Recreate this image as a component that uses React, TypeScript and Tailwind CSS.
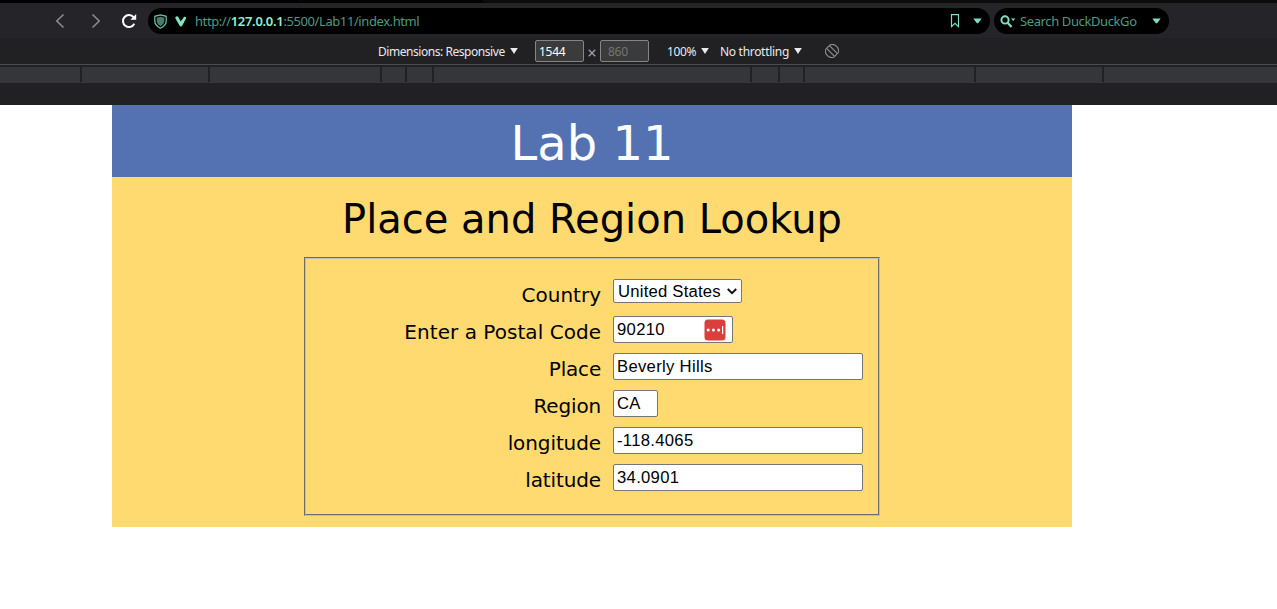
import React from "react";

const SEGMENTS = [80, 126, 170, 23, 25, 316, 26, 23, 169, 126];

const Caret = ({ className = "" }: { className?: string }) => (
  <svg width="8" height="6" viewBox="0 0 8 6" className={className}>
    <path d="M0.2 0H7.8L4 6Z" fill="currentColor" />
  </svg>
);

const Wedge = () => (
  <svg width="9" height="6" viewBox="0 0 9 6" className="text-[#7fdec0]">
    <path d="M0.3 0.5H8.7L5.3 4.9Q4.5 5.7 3.7 4.9Z" fill="currentColor" />
  </svg>
);

function AddressBar() {
  return (
    <div className="flex h-[35px] items-center bg-[#252429] pt-px font-['Noto_Sans',sans-serif] text-[#4f9a80]">
      <svg width="10" height="16" viewBox="0 0 10 16" className="ml-[55px]" fill="none" stroke="#8b8b8e" strokeWidth="1.6">
        <path d="M8.5 1.5L1.8 8L8.5 14.5" />
      </svg>
      <svg width="10" height="16" viewBox="0 0 10 16" className="ml-[26px]" fill="none" stroke="#8b8b8e" strokeWidth="1.6">
        <path d="M1.5 1.5L8.2 8L1.5 14.5" />
      </svg>
      <svg width="16" height="16" viewBox="0 0 16 16" className="ml-[20px]" fill="none">
        <path d="M12.6 4.2A6 6 0 1 0 13.3 10.8" stroke="#fff" strokeWidth="2" />
        <path d="M15.2 1V6.8H9.4Z" fill="#fff" />
      </svg>
      <div className="ml-[11px] flex h-[26px] w-[842px] shrink-0 items-center rounded-full bg-black">
        <svg width="13" height="15" viewBox="0 0 13 15" className="ml-[6px]">
          <path d="M6.5 0.8L12.2 2.3V7.4Q12 11.5 6.5 14.2Q1 11.5 0.8 7.4V2.3Z" fill="none" stroke="#6cc4a6" strokeWidth="1.2" />
          <path d="M6.5 2.8L10.3 3.8V7.4Q10 10.2 6.5 12.2Q3 10.2 2.7 7.4V3.8Z" fill="#467e6b" />
        </svg>
        <svg width="12" height="11" viewBox="0 0 12 11" className="ml-[8px]">
          <path d="M2 2L5.9 8.8L7.6 5.6" fill="none" stroke="#7fe3c4" strokeWidth="3.2" strokeLinecap="round" strokeLinejoin="round" />
          <path d="M7.3 6L9.7 2.2" fill="none" stroke="#7fe3c4" strokeWidth="2.8" strokeLinecap="round" />
        </svg>
        <div className="ml-[8px] w-[224px] text-[13px] leading-[18px] tracking-[-0.41px] whitespace-nowrap">
          http://<span className="font-semibold tracking-[-0.3px] text-[#8ef0d0]">127.0.0.1</span>:5500/Lab11/index.html
        </div>
        <svg width="10" height="14" viewBox="0 0 10 14" className="ml-[531px]">
          <path d="M1.5 0.7H8.5V12.6L5 9.4L1.5 12.6Z" fill="none" stroke="#7fdec0" strokeWidth="1.2" />
        </svg>
        <div className="ml-[13px]">
          <Wedge />
        </div>
      </div>
      <div className="ml-[4px] flex h-[26px] w-[175px] shrink-0 items-center rounded-full bg-black">
        <svg width="16" height="13" viewBox="0 0 16 13" className="ml-[6px]">
          <circle cx="5" cy="4.9" r="3.6" fill="none" stroke="#7fdec0" strokeWidth="2" />
          <path d="M7.4 7.6L11.5 12" stroke="#7fdec0" strokeWidth="2.2" />
          <path d="M11 3.5H15.3L13.2 6Z" fill="#7fdec0" />
        </svg>
        <div className="ml-[4px] w-[117px] text-[13px] leading-[18px] tracking-[-0.39px] whitespace-nowrap">Search DuckDuckGo</div>
        <div className="ml-[15px]">
          <Wedge />
        </div>
      </div>
    </div>
  );
}

function DeviceToolbar() {
  return (
    <div className="flex h-[27px] items-center border-b border-[#4b4c4f] bg-[#212123] font-['Noto_Sans',sans-serif] text-[12px] leading-[16px] whitespace-nowrap text-[#e8eaed]">
      <div className="ml-[378px] w-[127px] pt-[2px] tracking-[-0.45px]">Dimensions: Responsive</div>
      <Caret className="ml-[5px]" />
      <div className="ml-[17px] flex h-[22px] w-[49px] items-center rounded-[2px] border border-[#858585] bg-[#3b3b3b] pt-px pl-[3px] tracking-[-0.3px] text-white">1544</div>
      <svg width="8" height="8" viewBox="0 0 8 8" className="mx-[4px] mt-[4px]" stroke="#9aa0a6" strokeWidth="1.3">
        <path d="M0.8 0.8L7.2 7.2M7.2 0.8L0.8 7.2" />
      </svg>
      <div className="flex h-[22px] w-[49px] items-center rounded-[2px] border border-[#858585] bg-[#3b3b3b] pt-px pl-[7px] tracking-[-0.3px] text-[#757575]">860</div>
      <div className="ml-[18px] w-[30px] pt-[2px] tracking-[-0.4px]">100%</div>
      <Caret className="ml-[4px]" />
      <div className="ml-[11px] w-[69px] pt-[2px] tracking-[-0.3px]">No throttling</div>
      <Caret className="ml-[5px]" />
      <svg width="14" height="14" viewBox="0 0 14 14" className="ml-[23px]" fill="none" stroke="#8b8c8e" strokeWidth="1.1">
        <path d="M4.6 1A6.4 6.4 0 0 1 13 9.4M9.4 13A6.4 6.4 0 0 1 1 4.6" />
        <path d="M1.6 4.4L4.4 1.6L12.4 9.6L9.6 12.4Z" />
      </svg>
    </div>
  );
}

function Ruler() {
  return (
    <div className="h-[40px] bg-[#212123] pt-[2px]">
      <div className="flex h-[16px] gap-[2px] border-b border-[#35363a]">
        {SEGMENTS.map((w, i) => (
          <div key={i} className="shrink-0 bg-[#35363a]" style={{ width: w }} />
        ))}
        <div className="flex-1 bg-[#35363a]" />
      </div>
    </div>
  );
}

const FIELDS = [
  { label: "Enter a Postal Code", value: "90210", width: "w-[120px]", track: "tracking-[0.04px]", badge: true },
  { label: "Place", value: "Beverly Hills", width: "w-[250px]", track: "tracking-[-0.2px]" },
  { label: "Region", value: "CA", width: "w-[45px]", track: "tracking-[-0.15px]" },
  { label: "longitude", value: "-118.4065", width: "w-[250px]", track: "tracking-[-0.1px]" },
  { label: "latitude", value: "34.0901", width: "w-[250px]", track: "tracking-[-0.12px]" },
];

const LABEL = "w-[295px] pt-[4px] text-right text-[20px] leading-[24px] whitespace-nowrap";

export default function App() {
  return (
    <div className="h-[609px] w-[1277px] overflow-hidden bg-white">
      <div className="flex h-[3px] bg-black">
        <div className="w-[299px]" />
        <div className="w-[184px] bg-[#030303]" />
        <div className="flex-1 bg-[#0b0b0b]" />
      </div>
      <AddressBar />
      <DeviceToolbar />
      <Ruler />
      <main className="ml-[112px] w-[960px] bg-[#ffda70] font-['DejaVu_Sans',sans-serif] text-black">
        <h1 className="h-[72px] bg-[#5472b2] pt-[9px] text-center text-[48px] leading-[58px] text-white">Lab 11</h1>
        <div className="h-[350px] pt-[18px]">
          <h2 className="text-center text-[40px] leading-[48px] whitespace-nowrap">Place and Region Lookup</h2>
          <div className="mx-auto mt-[14px] h-[259px] w-[576px] border border-t-[#6d6d6d] border-r-[#bdbdbd] border-b-[#bdbdbd] border-l-[#6d6d6d]">
            <div className="h-full border border-t-[#bdbdbd] border-r-[#6d6d6d] border-b-[#6d6d6d] border-l-[#bdbdbd] pt-[20px]">
              <div className="flex h-[37px] gap-[12px]">
                <label className={LABEL}>Country</label>
                <div className="flex h-[24px] w-[129px] items-center rounded-[2px] border border-[#767676] bg-white pl-[4px] font-['Liberation_Sans',sans-serif] text-[16.67px] tracking-[0.22px] whitespace-nowrap">
                  <span className="w-[109px]">United States</span>
                  <svg width="10" height="7" viewBox="0 0 10 7" fill="none" stroke="#111" strokeWidth="2">
                    <path d="M0.8 1L5 5.2L9.2 1" />
                  </svg>
                </div>
              </div>
              {FIELDS.map((f) => (
                <div key={f.label} className="flex h-[37px] gap-[12px]">
                  <label className={`${LABEL} ${f.track}`}>{f.label}</label>
                  <div className={`${f.width} flex h-[27px] items-center rounded-[2px] border border-[#767676] bg-white pl-[3px] font-['Liberation_Sans',sans-serif] text-[16.67px] tracking-[0.3px]`}>
                    <span>{f.value}</span>
                    {f.badge && (
                      <svg width="22" height="22" viewBox="0 0 22 22" className="mr-[6px] ml-auto">
                        <rect x="0.5" y="0.5" width="21" height="21" rx="3.5" fill="#d93f3c" />
                        <g fill="#fff">
                          <circle cx="4.2" cy="11" r="1.5" />
                          <circle cx="9.4" cy="11" r="1.5" />
                          <circle cx="14.6" cy="11" r="1.5" />
                          <rect x="18" y="7" width="1.2" height="8" />
                        </g>
                      </svg>
                    )}
                  </div>
                </div>
              ))}
            </div>
          </div>
        </div>
      </main>
    </div>
  );
}
